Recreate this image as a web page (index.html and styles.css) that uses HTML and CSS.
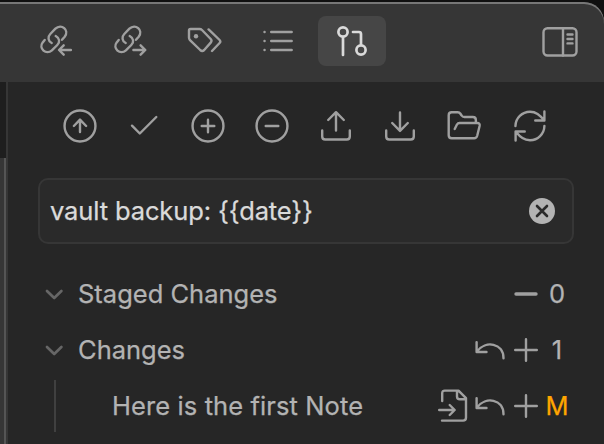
FILE: index.html
```html
<!DOCTYPE html>
<html lang="en">
<head>
<meta charset="utf-8">
<title>Source control</title>
<link rel="stylesheet" href="styles.css">
</head>
<body>
<svg width="0" height="0" class="defs">
  <defs>
    <g id="chain">
      <path d="M23 27C19.3 25 18.8 20.8 21.6 18L26.7 12.7C32.7 7 41 14 36 20.7L33.3 23.8"/>
      <path d="M16 24L14 26.4C9.5 32.5 17.5 39.5 23.2 34.4L28.6 29C31.6 26 30.8 22 27 20"/>
    </g>
    <g id="undo"><path d="M1.6 7.1V17H11.5M2 16.4C10.5 5 28.5 8 28.5 23.2"/></g>
    <g id="plus"><path d="M1.2 12H22.8M12 1.2V22.8"/></g>
    <g id="chevron"><path d="M2 2L9.2 9L16.4 2"/></g>
  </defs>
</svg>
<div class="window">
  <header class="tabs">
    <nav class="tab-list">
      <div class="tab"><svg width="52" height="50" viewBox="1.3 0 52 50"><use href="#chain"/><path d="M42.2 34H30.5M35 29.3L30.3 34L35 38.7"/></svg></div>
      <div class="tab"><svg width="52" height="50" viewBox="1.3 0 52 50"><use href="#chain"/><path d="M30.7 34H42.5M37.9 29.3L42.6 34L37.9 38.7"/></svg></div>
      <div class="tab"><svg width="36" height="36" viewBox="0 0 36 36"><path d="M4.5 6H13.5Q15 6 16 7L24.7 16Q26.3 17.8 24.7 19.6L18.2 27Q16.2 28.8 14.2 27L4 17.2Q3 16 3 14.8V7.5Q3 6 4.5 6ZM22.6 6.4L33.6 17Q35 18.5 33.6 20L26 28"/><circle class="dot" cx="10" cy="13.2" r="2.2"/></svg></div>
      <div class="tab"><svg width="36" height="36" viewBox="-2 0 36 36"><path d="M9.2 9H29.7M9.2 18H29.7M9.2 27H29.7M2.5 9h.1M2.5 18h.1M2.5 27h.1"/></svg></div>
      <div class="tab active"><svg width="36" height="36" viewBox="0 0 36 36"><circle cx="9" cy="9" r="4.6"/><circle cx="27" cy="27" r="4.6"/><path d="M9 14V32M19 9H25Q27 9 27 11V22"/></svg></div>
    </nav>
    <svg class="sidebar-toggle" width="36" height="32" viewBox="0 0 36 32"><rect x="1.5" y="2.3" width="33" height="27.2" rx="4"/><path d="M21 2.3V29.5M25.5 8.5H30.5M25.5 13H30.5M25.5 17.4H30.5"/></svg>
  </header>
  <div class="body">
    <div class="divider"><div class="editor-top"></div><div class="editor-edge"></div></div>
    <main class="panel">
      <div class="toolbar">
        <svg viewBox="0 0 24 24"><circle cx="12" cy="12" r="10.3"/><path d="M12 16V7.8M7.9 12L12 7.7L16.1 12"/></svg>
        <svg viewBox="0 0 24 24"><path d="M20.2 6L9.2 17L4 11.8"/></svg>
        <svg viewBox="0 0 24 24"><circle cx="12" cy="12" r="10.3"/><path d="M12 7.8V16.2M7.8 12H16.2"/></svg>
        <svg viewBox="0 0 24 24"><circle cx="12" cy="12" r="10.3"/><path d="M7.8 12H16.2"/></svg>
        <svg viewBox="0 0 24 24"><path d="M21.2 15V19Q21.2 21 19.2 21H4.8Q2.8 21 2.8 19V15M17.2 8L12 2.8L6.8 8M12 3V15"/></svg>
        <svg viewBox="0 0 24 24"><path d="M21.2 15V19Q21.2 21 19.2 21H4.8Q2.8 21 2.8 19V15M6.8 10L12 15.3L17.2 10M12 15V3"/></svg>
        <svg viewBox="0 0 24 24"><path d="M5.8 14L7.3 11Q7.9 10 9 10H20.8Q22.8 10 22.4 12L20.8 18.5Q20.3 20.2 18.8 20.2H3.8Q1.8 20.2 1.8 18.2V4.8Q1.8 2.8 3.8 2.8H7.8Q9 2.8 9.5 3.7L10.4 5Q11 6 12.2 6H17.9Q19.9 6 19.9 8V10"/></svg>
        <svg class="refresh" viewBox="0 0 24 24"><path d="M2.3 12A9.7 9.7 0 0 1 12 2.5C16 2.5 18.3 4.5 21.5 8.2M21.6 2.3V8.3H15.5M21.6 12A9.7 9.7 0 0 1 12 21.5C8 21.5 5.7 19.5 2.5 15.8M2.4 21.7V15.7H8.5"/></svg>
      </div>
      <div class="message">
        <span class="message-text">vault backup: {{date}}</span>
        <svg class="clear" width="26" height="26" viewBox="0 0 26 26"><circle cx="13" cy="13" r="13"/><path d="M8 8L18 18M18 8L8 18"/></svg>
      </div>
      <section class="tree">
        <div class="row">
          <svg class="chevron" width="19" height="11" viewBox="0 0 19 11"><use href="#chevron"/></svg>
          <span class="label">Staged Changes</span>
          <div class="actions"><svg class="bold" width="24" height="24" viewBox="0 0 24 24"><path d="M2 12H22"/></svg><span class="count">0</span></div>
        </div>
        <div class="row">
          <svg class="chevron" width="19" height="11" viewBox="0 0 19 11"><use href="#chevron"/></svg>
          <span class="label">Changes</span>
          <div class="actions"><svg class="undo" width="30" height="30" viewBox="0 0 30 30"><use href="#undo"/></svg><svg width="24" height="24" viewBox="0 0 24 24"><use href="#plus"/></svg><span class="count">1</span></div>
        </div>
        <div class="row file">
          <span class="label note">Here is the first Note</span>
          <div class="actions"><svg class="open" width="30" height="36" viewBox="0 0 30 36"><path d="M4.2 13V5.2Q4.2 2.6 6.8 2.6H20.5L28 10.2V29.5Q28 32.6 25 32.6H4M19 3V8.5Q19 11.3 21.8 11.3H27.5M1.2 22H16.5M11.7 17L16.7 22L11.7 27"/></svg><svg class="undo" width="30" height="30" viewBox="0 0 30 30"><use href="#undo"/></svg><svg width="24" height="24" viewBox="0 0 24 24"><use href="#plus"/></svg><span class="count modified">M</span></div>
        </div>
      </section>
    </main>
  </div>
</div>
</body>
</html>
```
FILE: styles.css
```css
* { box-sizing: border-box; }
body {
  margin: 0;
  width: 604px;
  height: 444px;
  overflow: hidden;
  background: #101010;
  color: #b3b3b3;
  font-family: Inter, "Liberation Sans", sans-serif;
  font-size: 25.5px;
  -webkit-text-stroke: 0.25px currentColor;
}
svg {
  display: block;
  flex: none;
  fill: none;
  stroke: #a0a0a0;
  stroke-width: 2.4;
  stroke-linecap: round;
  stroke-linejoin: round;
}
.defs { position: absolute; }
.window { padding-top: 2px; }
.tabs {
  height: 80px;
  display: flex;
  justify-content: space-between;
  padding: 14px 26px 0 22px;
  background: #363636;
  border-top-right-radius: 20px;
  box-shadow: inset 0 2px 0 #777;
}
.tab-list { display: flex; gap: 6px; }
.tab {
  width: 68px;
  height: 50px;
  display: flex;
  align-items: center;
  justify-content: center;
  border-radius: 8px;
}
.tab.active { background: #464646; }
.tab.active svg { stroke: #dadada; stroke-width: 2.7; }
.dot { fill: #a0a0a0; stroke: none; }
.sidebar-toggle { margin-top: 10px; }
.body { display: flex; height: 362px; background: #262626; }
.divider { width: 8px; display: flex; flex-direction: column; border-right: 2px solid #363636; background: #363636; }
.editor-top { height: 76px; background: #1e1e1e; }
.editor-edge { flex: 1; border-right: 2px solid #555; }
.panel { flex: 1; padding-top: 26px; }
.toolbar { display: flex; gap: 28px; padding-left: 54px; }
.toolbar svg { width: 36px; height: 36px; stroke-width: 1.6; }
.toolbar .refresh { margin-left: 2px; }
.message {
  margin: 34px 30px 0;
  height: 66px;
  display: flex;
  align-items: center;
  justify-content: space-between;
  padding: 0 17px 0 10px;
  border: 2px solid #363636;
  border-radius: 10px;
  background: #2a2a2a;
  color: #dadada;
}
.message-text, .label { white-space: nowrap; padding-bottom: 2px; }
.message-text { letter-spacing: -0.12px; }
.clear circle { fill: #b3b3b3; stroke: none; }
.clear path { stroke: #2a2a2a; stroke-width: 2.6; }
.tree { padding: 22px 30px 0; }
.row { height: 56px; display: flex; align-items: center; padding-left: 7px; }
.chevron { stroke: #666; stroke-width: 2.7; }
.label { margin-left: 14px; }
.note { letter-spacing: 0.1px; }
.actions { margin-left: auto; display: flex; align-items: center; }
.actions .undo { margin-right: 9px; }
.actions .open { margin-right: 7px; }
.bold { stroke-width: 3.4; }
.count { width: 36px; padding: 0 0 2px 2px; text-align: center; }
.modified { padding-bottom: 1px; color: orange; }
.file { height: 52px; margin: 2px 0 0 16px; padding-left: 42px; border-left: 2px solid #404040; }
```
